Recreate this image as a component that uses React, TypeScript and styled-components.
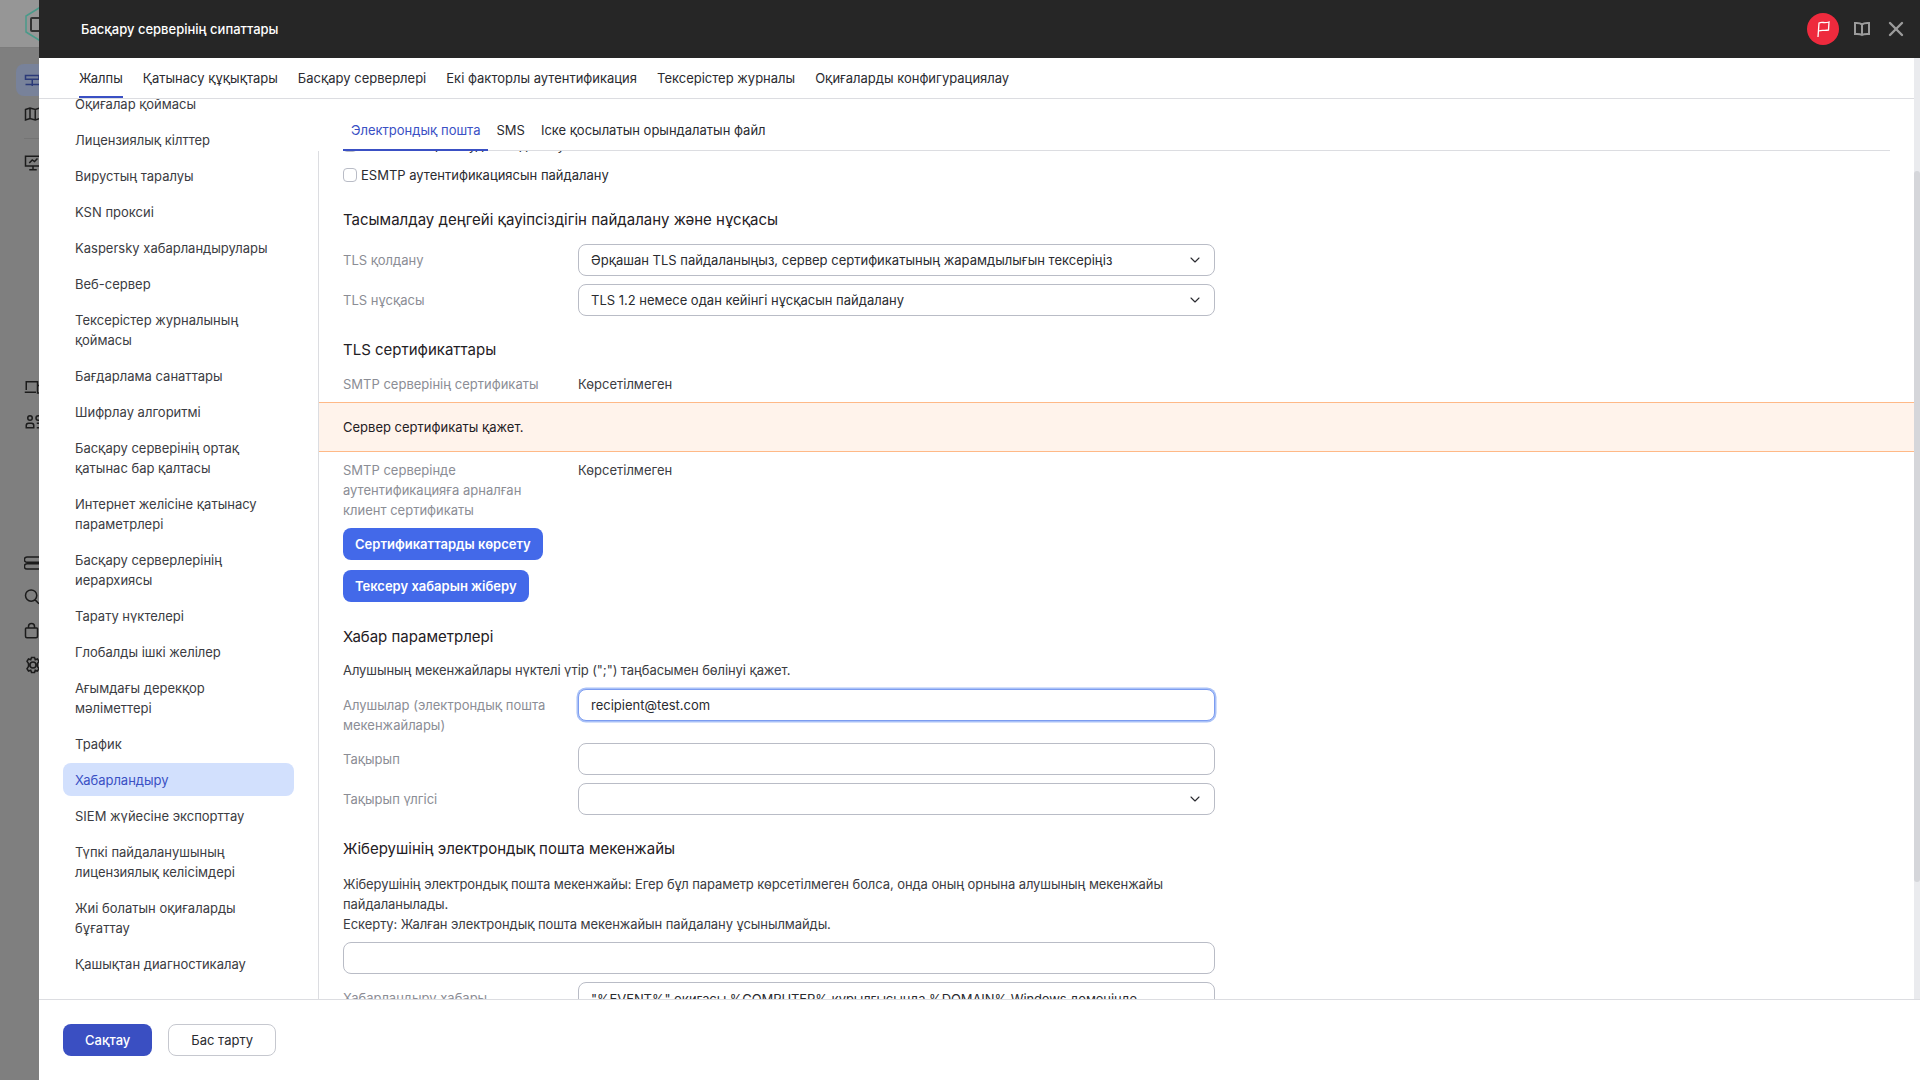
import { ChevronDown, X } from 'lucide-react'
import styled, { createGlobalStyle } from 'styled-components'

const GlobalStyle = createGlobalStyle`
  html, body {
    margin: 0;
    height: 100%;
    overflow: hidden;
  }

  body {
    font-family: Inter, 'Noto Sans', 'Liberation Sans', sans-serif;
    font-size: 13px;
    line-height: 20px;
    color: #2a2b30;
  }

  * {
    box-sizing: border-box;
  }
`

const Page = styled.div`
  display: flex;
  width: 1920px;
  height: 1080px;
  overflow: hidden;
`

const Rail = styled.div`
  width: 39px;
  flex: none;
  overflow: hidden;
  background: #7f7f7f;
  display: flex;
  flex-direction: column;
`

const RailTop = styled.div`
  height: 48px;
  flex: none;
  background: #969696;
  border-bottom: 1px solid #7c7c7c;
  padding: 7px 0 0 25px;
  margin-bottom: 16px;
`

const RailSlot = styled.div<{ $gap?: number; $active?: boolean }>`
  width: 48px;
  height: 32px;
  flex: none;
  margin-top: ${(p) => p.$gap ?? 0}px;
  margin-left: 16px;
  padding: 7px 0 0 8px;
  border-radius: 8px;
  color: ${(p) => (p.$active ? '#2b3a78' : '#1c1c1c')};
  background: ${(p) => (p.$active ? '#78829a' : 'transparent')};
`

const RailLine = styled.div`
  height: 1px;
  flex: none;
  margin: 8px 0 0 24px;
  background: #747474;
`

const Drawer = styled.div`
  flex: 1;
  min-width: 0;
  display: flex;
  flex-direction: column;
  background: #fff;
`

const Header = styled.header`
  height: 58px;
  flex: none;
  display: flex;
  align-items: center;
  padding: 0 12px 0 42px;
  background: #262626;
  color: #fff;
  font-size: 13px;
  font-weight: 500;
`

const HeaderTitle = styled.div`
  flex: 1;
`

const FlagBadge = styled.div`
  width: 32px;
  height: 32px;
  border-radius: 50%;
  background: #ee2a3d;
  display: flex;
  align-items: center;
  justify-content: center;
  margin-right: 14px;
`

const HeaderIcon = styled.div`
  display: flex;
  color: #9b9b9b;
`

const CloseIcon = styled(HeaderIcon)`
  margin-left: 13px;
`

const Body = styled.div`
  flex: 1;
  min-height: 0;
  display: flex;
`

const Panel = styled.div`
  flex: 1;
  min-width: 0;
  display: flex;
  flex-direction: column;
`

const TopTabs = styled.nav`
  height: 41px;
  flex: none;
  display: flex;
  gap: 20px;
  padding-left: 40px;
  border-bottom: 1px solid #dcdde1;
`

const TopTab = styled.div<{ $active?: boolean }>`
  height: 40px;
  padding-top: 10px;
  white-space: nowrap;
  color: #2a2b30;
  border-bottom: 2px solid ${(p) => (p.$active ? '#3a50c4' : 'transparent')};
`

const Split = styled.div`
  flex: 1;
  min-height: 0;
  display: flex;
`

const Sidebar = styled.aside`
  width: 280px;
  flex: none;
  overflow: hidden;
  display: flex;
  flex-direction: column;
  padding: 0 25px 0 24px;
`

const SideList = styled.div`
  margin-top: -12px;
  display: flex;
  flex-direction: column;
  gap: 3px;
`

const SideItem = styled.div<{ $active?: boolean }>`
  padding: 6.5px 12px;
  border-radius: 8px;
  color: ${(p) => (p.$active ? '#3a50c4' : '#3b3c42')};
  background: ${(p) => (p.$active ? '#d2e0fd' : 'transparent')};
`

const Main = styled.main`
  flex: 1;
  min-width: 0;
  display: flex;
  flex-direction: column;
`

const SubTabs = styled.div`
  height: 52px;
  flex: none;
  display: flex;
  margin-left: 24px;
`

const SubTabRow = styled.div`
  flex: none;
  width: 1547px;
  display: flex;
  border-bottom: 1px solid #dcdde1;
`

const SubTab = styled.div<{ $active?: boolean }>`
  padding: 21px 8px 0;
  height: 52px;
  white-space: nowrap;
  color: ${(p) => (p.$active ? '#3a50c4' : '#2a2b30')};
  border-bottom: ${(p) => (p.$active ? '2px solid #3a50c4' : 'none')};
`

const Scroller = styled.div`
  flex: 1;
  min-height: 0;
  overflow: hidden;
  border-left: 1px solid #dcdde1;
  margin-left: -1px;
`

const Form = styled.div`
  margin-top: -20px;
`

const Indent = styled.div`
  padding-left: 24px;
  width: 896px;
`

const CheckRow = styled.label<{ $after?: number }>`
  display: flex;
  align-items: center;
  gap: 4px;
  height: 27px;
  margin-bottom: ${(p) => p.$after ?? 0}px;
`

const CheckBox = styled.span`
  width: 14px;
  height: 14px;
  flex: none;
  border: 1px solid #b9bcc6;
  border-radius: 4px;
`

const Heading = styled.h3<{ $top: number }>`
  margin: ${(p) => p.$top}px 0 0;
  font-size: 15px;
  line-height: 24px;
  font-weight: 400;
  color: #1f2024;
`

const Row = styled.div<{ $top: number }>`
  display: grid;
  grid-template-columns: 235px 637px;
  margin-top: ${(p) => p.$top}px;
`

const Label = styled.div<{ $pad?: number }>`
  color: #8b8d95;
  padding-top: ${(p) => p.$pad ?? 6}px;
  padding-right: 16px;
`

const Value = styled.div`
  color: #3b3c42;
`

const Field = styled.div<{ $focus?: boolean }>`
  height: 32px;
  display: flex;
  align-items: center;
  justify-content: space-between;
  padding: 0 11px 0 12px;
  border: 1px solid ${(p) => (p.$focus ? '#7c9cf0' : '#b9bcc6')};
  border-radius: 8px;
  background: #fff;
  color: #2a2b30;
  white-space: nowrap;
  overflow: hidden;
  box-shadow: ${(p) => (p.$focus ? '0 0 0 1.5px #a9c1f7' : 'none')};
`

const FullField = styled(Field)`
  width: 872px;
  margin-top: 8px;
`

const ClippedField = styled(Field)`
  height: 60px;
  align-items: flex-start;
  padding-top: 6px;
  letter-spacing: -0.1px;
`

const Banner = styled.div`
  height: 50px;
  margin-top: 8px;
  padding: 14px 0 0 24px;
  background: #fff3eb;
  border-top: 1px solid #ffb987;
  border-bottom: 1px solid #ffb987;
  color: #1f2024;
`

const PrimaryBtn = styled.div<{ $top: number }>`
  display: inline-block;
  height: 32px;
  margin-top: ${(p) => p.$top}px;
  padding: 6px 12px;
  border-radius: 8px;
  background: #4369e9;
  color: #fff;
  font-weight: 600;
  white-space: nowrap;
`

const BtnLine = styled.div`
  display: flex;
`

const Note = styled.p<{ $top: number }>`
  margin: ${(p) => p.$top}px 0 0;
  color: #3b3c42;
  letter-spacing: -0.08px;
`

const Footer = styled.footer`
  height: 81px;
  flex: none;
  display: flex;
  gap: 16px;
  padding: 24px;
  border-top: 1px solid #dcdde1;
`

const SaveBtn = styled.div`
  height: 32px;
  padding: 6px 22px;
  border-radius: 8px;
  background: #3a4fc2;
  color: #fff;
  font-weight: 500;
`

const CancelBtn = styled.div`
  height: 32px;
  padding: 5px 22px;
  border-radius: 8px;
  border: 1px solid #c6c8cf;
  color: #2a2b30;
`

const ScrollTrack = styled.div`
  width: 6px;
  flex: none;
  background: #eaebee;
  padding-top: 113px;
`

const ScrollThumb = styled.div`
  height: 711px;
  background: #d5d6da;
  border-radius: 3px;
`

const sideItems = [
  'Оқиғалар қоймасы',
  'Лицензиялық кілттер',
  'Вирустың таралуы',
  'KSN проксиі',
  'Kaspersky хабарландырулары',
  'Веб-сервер',
  'Тексерістер журналының қоймасы',
  'Бағдарлама санаттары',
  'Шифрлау алгоритмі',
  'Басқару серверінің ортақ қатынас бар қалтасы',
  'Интернет желісіне қатынасу параметрлері',
  'Басқару серверлерінің иерархиясы',
  'Тарату нүктелері',
  'Глобалды ішкі желілер',
  'Ағымдағы дерекқор мәліметтері',
  'Трафик',
  'Хабарландыру',
  'SIEM жүйесіне экспорттау',
  'Түпкі пайдаланушының лицензиялық келісімдері',
  'Жиі болатын оқиғаларды бұғаттау',
  'Қашықтан диагностикалау',
]

const topTabs = [
  'Жалпы',
  'Қатынасу құқықтары',
  'Басқару серверлері',
  'Екі факторлы аутентификация',
  'Тексерістер журналы',
  'Оқиғаларды конфигурациялау',
]

function RailIcon({ d }: { d: string }) {
  return (
    <svg width='18' height='18' viewBox='0 0 24 24' fill='none' stroke='currentColor' strokeWidth='2'>
      <path d={d} />
    </svg>
  )
}

export default function App() {
  return (
    <Page>
      <GlobalStyle />
      <Rail>
        <RailTop>
          <svg width='28' height='34' viewBox='0 0 28 34' fill='none'>
            <path d='M14 1 27 9v16l-13 8-13-8V9z' stroke='#4a9a8a' strokeWidth='1.5' />
            <rect x='6' y='11' width='12' height='13' rx='1' fill='none' stroke='#333' strokeWidth='2' />
          </svg>
        </RailTop>
        <RailSlot $active>
          <RailIcon d='M2 6h18v5H2zM11 11v7M2 18h20M11 14v6' />
        </RailSlot>
        <RailSlot $gap={2}>
          <RailIcon d='M2 6l6-2 7 2 6-2v14l-6 2-7-2-6 2zM8 4v14M15 6v14' />
        </RailSlot>
        <RailLine />
        <RailSlot $gap={8}>
          <RailIcon d='M2 3h20v13H2zM7 12l4-4 3 2 4-4M12 16v4M7 21h10' />
        </RailSlot>
        <RailSlot $gap={192}>
          <RailIcon d='M3 16V5h15v11M1 19h15M18 10h6v10h-6z' />
        </RailSlot>
        <RailSlot $gap={2}>
          <RailIcon d='M5 8a3 3 0 1 0 6 0a3 3 0 1 0-6 0M3 21v-3a3 3 0 0 1 3-3h4a3 3 0 0 1 3 3v3zM16 8a3 3 0 1 0 6 0a3 3 0 1 0-6 0M17 15h3a3 3 0 0 1 3 3v3h-6' />
        </RailSlot>
        <RailSlot $gap={110}>
          <RailIcon d='M4 4h20a3 3 0 0 1 0 7H4a3 3 0 0 1 0-7zM4 13h20a3 3 0 0 1 0 7H4a3 3 0 0 1 0-7z' />
        </RailSlot>
        <RailSlot $gap={2}>
          <RailIcon d='M2 10a7.500 7.500 0 1 0 15 0a7.500 7.500 0 1 0-15 0M14.500 15.500 20 21' />
        </RailSlot>
        <RailSlot $gap={2}>
          <RailIcon d='M3 8h14a1 1 0 0 1 1 1v10a2 2 0 0 1-2 2H4a2 2 0 0 1-2-2V9a1 1 0 0 1 1-1zM6 8V6a4 4 0 0 1 8 0v2' />
        </RailSlot>
        <RailSlot $gap={2}>
          <RailIcon d='M8 12a4 4 0 1 0 8 0a4 4 0 1 0-8 0M10 2h4l1 3 3-1 2 3-2 3v4l2 3-2 3-3-1-1 3h-4l-1-3-3 1-2-3 2-3v-4L4 7l2-3 3 1z' />
        </RailSlot>
      </Rail>

      <Drawer>
        <Header>
          <HeaderTitle>Басқару серверінің сипаттары</HeaderTitle>
          <FlagBadge>
            <svg width='16' height='18' viewBox='0 0 16 18' fill='none' stroke='#fff' strokeWidth='1.3'>
              <path d='M3 17 4 3C7 1.500 9 3.500 14 2l-.5 8C9 11 7 9.500 3.600 11' />
            </svg>
          </FlagBadge>
          <HeaderIcon>
            <svg width='18' height='16' viewBox='0 0 18 16' fill='none' stroke='currentColor' strokeWidth='2'>
              <path d='M9 3.500C7.500 2 5 1.800 2 2v11c3-.2 5.500 0 7 1 1.500-1 4-1.200 7-1V2c-3-.2-5.500 0-7 1.500zM9 3.500V14' />
            </svg>
          </HeaderIcon>
          <CloseIcon>
            <X size={24} strokeWidth={2.4} />
          </CloseIcon>
        </Header>

        <Body>
          <Panel>
            <TopTabs>
              {topTabs.map((t, i) => (
                <TopTab key={t} $active={i === 0}>
                  {t}
                </TopTab>
              ))}
            </TopTabs>

            <Split>
              <Sidebar>
                <SideList>
                  {sideItems.map((s) => (
                    <SideItem key={s} $active={s === 'Хабарландыру'}>
                      {s}
                    </SideItem>
                  ))}
                </SideList>
              </Sidebar>

              <Main>
                <SubTabs>
                  <SubTabRow>
                    <SubTab $active>Электрондық пошта</SubTab>
                    <SubTab>SMS</SubTab>
                    <SubTab>Іске қосылатын орындалатын файл</SubTab>
                  </SubTabRow>
                </SubTabs>

                <Scroller>
                  <Form>
                    <Indent>
                      <CheckRow $after={3}>
                        <CheckBox />
                        SMTP-пен қосылуды пайдалану
                      </CheckRow>
                      <CheckRow>
                        <CheckBox />
                        ESMTP аутентификациясын пайдалану
                      </CheckRow>
                      <Heading $top={20}>Тасымалдау деңгейі қауіпсіздігін пайдалану және нұсқасы</Heading>
                      <Row $top={12}>
                        <Label>TLS қолдану</Label>
                        <Field>
                          Әрқашан TLS пайдаланыңыз, сервер сертификатының жарамдылығын тексеріңіз
                          <ChevronDown size={16} strokeWidth={1.6} />
                        </Field>
                      </Row>
                      <Row $top={8}>
                        <Label>TLS нұсқасы</Label>
                        <Field>
                          TLS 1.2 немесе одан кейінгі нұсқасын пайдалану
                          <ChevronDown size={16} strokeWidth={1.6} />
                        </Field>
                      </Row>
                      <Heading $top={22}>TLS сертификаттары</Heading>
                      <Row $top={12}>
                        <Label $pad={0}>SMTP серверінің сертификаты</Label>
                        <Value>Көрсетілмеген</Value>
                      </Row>
                    </Indent>

                    <Banner>Сервер сертификаты қажет.</Banner>

                    <Indent>
                      <Row $top={8}>
                        <Label $pad={0}>SMTP серверінде аутентификацияға арналған клиент сертификаты</Label>
                        <Value>Көрсетілмеген</Value>
                      </Row>
                      <BtnLine>
                        <PrimaryBtn $top={8}>Сертификаттарды көрсету</PrimaryBtn>
                      </BtnLine>
                      <BtnLine>
                        <PrimaryBtn $top={10}>Тексеру хабарын жіберу</PrimaryBtn>
                      </BtnLine>
                      <Heading $top={23}>Хабар параметрлері</Heading>
                      <Note $top={11}>Алушының мекенжайлары нүктелі үтір (";") таңбасымен бөлінуі қажет.</Note>
                      <Row $top={9}>
                        <Label>Алушылар (электрондық пошта мекенжайлары)</Label>
                        <Field $focus>recipient@test.com</Field>
                      </Row>
                      <Row $top={8}>
                        <Label>Тақырып</Label>
                        <Field />
                      </Row>
                      <Row $top={8}>
                        <Label>Тақырып үлгісі</Label>
                        <Field>
                          <span />
                          <ChevronDown size={16} strokeWidth={1.6} />
                        </Field>
                      </Row>
                      <Heading $top={22}>Жіберушінің электрондық пошта мекенжайы</Heading>
                      <Note $top={13}>
                        Жіберушінің электрондық пошта мекенжайы: Егер бұл параметр көрсетілмеген болса, онда оның орнына
                        алушының мекенжайы пайдаланылады.
                        <br />
                        Ескерту: Жалған электрондық пошта мекенжайын пайдалану ұсынылмайды.
                      </Note>
                      <FullField />
                      <Row $top={8}>
                        <Label>Хабарландыру хабары</Label>
                        <ClippedField>"%EVENT%" оқиғасы %COMPUTER% құрылғысында %DOMAIN% Windows доменінде</ClippedField>
                      </Row>
                    </Indent>
                  </Form>
                </Scroller>
              </Main>
            </Split>
          </Panel>

          <ScrollTrack>
            <ScrollThumb />
          </ScrollTrack>
        </Body>

        <Footer>
          <SaveBtn>Сақтау</SaveBtn>
          <CancelBtn>Бас тарту</CancelBtn>
        </Footer>
      </Drawer>
    </Page>
  )
}
